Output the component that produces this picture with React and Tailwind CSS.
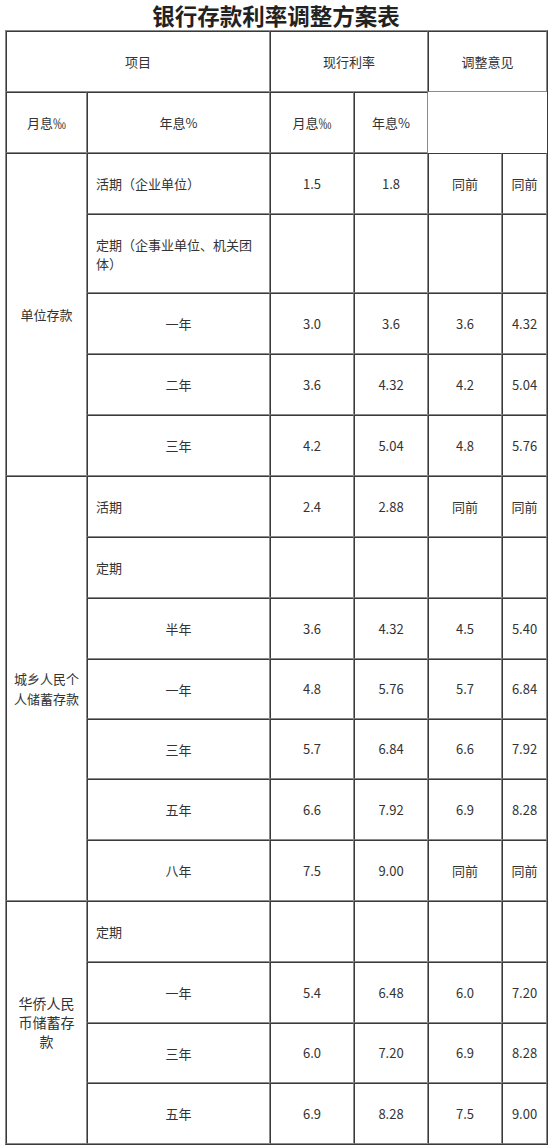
import React from "react";

// 银行存款利率调整方案表 — bordered rate table
const font = "font-['Microsoft_YaHei','Noto_Sans_CJK_SC',sans-serif]";

const cell =
  "border border-t-[#3a3a3a] border-l-[#3a3a3a] border-b-[#8a8a8a] border-r-[#8a8a8a] align-middle";

const groups = [
  {
    label: ["单位存款"],
    size: "text-[13px] leading-[19px]",
    rows: [
      { name: "活期（企业单位）", left: true, v: ["1.5", "1.8", "同前", "同前"] },
      { name: "定期（企事业单位、机关团体）", left: true, tall: true, v: ["", "", "", ""] },
      { name: "一年", v: ["3.0", "3.6", "3.6", "4.32"] },
      { name: "二年", v: ["3.6", "4.32", "4.2", "5.04"] },
      { name: "三年", v: ["4.2", "5.04", "4.8", "5.76"] },
    ],
  },
  {
    label: ["城乡人民个", "人储蓄存款"],
    size: "text-[13px] leading-[20px]",
    rows: [
      { name: "活期", left: true, v: ["2.4", "2.88", "同前", "同前"] },
      { name: "定期", left: true, v: ["", "", "", ""] },
      { name: "半年", v: ["3.6", "4.32", "4.5", "5.40"] },
      { name: "一年", v: ["4.8", "5.76", "5.7", "6.84"], short: true },
      { name: "三年", v: ["5.7", "6.84", "6.6", "7.92"], short: true },
      { name: "五年", v: ["6.6", "7.92", "6.9", "8.28"] },
      { name: "八年", v: ["7.5", "9.00", "同前", "同前"] },
    ],
  },
  {
    label: ["华侨人民", "币储蓄存", "款"],
    size: "text-[14px] leading-[19px]",
    rows: [
      { name: "定期", left: true, v: ["", "", "", ""] },
      { name: "一年", v: ["5.4", "6.48", "6.0", "7.20"] },
      { name: "三年", v: ["6.0", "7.20", "6.9", "8.28"], short: true },
      { name: "五年", v: ["6.9", "8.28", "7.5", "9.00"] },
    ],
  },
];

export default function App() {
  return (
    <div className={`w-[552px] bg-white text-[#333] [text-spacing-trim:space-all] ${font}`}>
      <h1 className="h-[30px] text-center text-[22.5px] font-bold leading-[30px] text-[#222]">
        银行存款利率调整方案表
      </h1>
      <table className="ml-[5px] w-[543px] table-fixed border-separate border-spacing-0 border border-t-[#8a8a8a] border-l-[#8a8a8a] border-b-[#3a3a3a] border-r-[#3a3a3a] text-[13px]">
        <colgroup>
          <col className="w-[81px]" />
          <col className="w-[183px]" />
          <col className="w-[84px]" />
          <col className="w-[74px]" />
          <col className="w-[74px]" />
          <col className="w-[45px]" />
        </colgroup>
        <tbody>
          <tr className="h-[61px]">
            <td colSpan={2} className={`${cell} text-center`}>项目</td>
            <td colSpan={2} className={`${cell} text-center`}>现行利率</td>
            <td colSpan={2} className={`${cell} text-center`}>调整意见</td>
          </tr>
          <tr className="h-[61px]">
            <td className={`${cell} text-center`}>月息‰</td>
            <td className={`${cell} text-center`}>年息%</td>
            <td className={`${cell} text-center`}>月息‰</td>
            <td className={`${cell} text-center`}>年息%</td>
          </tr>
          {groups.map((g) =>
            g.rows.map((r, i) => (
              <tr
                key={g.label[0] + r.name + i}
                className={r.tall ? "h-[79px]" : r.short ? "h-[60px]" : "h-[61px]"}
              >
                {i === 0 && (
                  <td rowSpan={g.rows.length} className={`${cell} px-1 text-center ${g.size}`}>
                    {g.label.map((l) => (
                      <div key={l}>{l}</div>
                    ))}
                  </td>
                )}
                <td
                  className={`${cell} leading-[19px] ${
                    r.left ? "px-2 text-left" : "text-center"
                  }`}
                >
                  {r.name}
                </td>
                {r.v.map((v, j) => (
                  <td key={j} className={`${cell} text-center`}>
                    {v}
                  </td>
                ))}
              </tr>
            ))
          )}
        </tbody>
      </table>
    </div>
  );
}
